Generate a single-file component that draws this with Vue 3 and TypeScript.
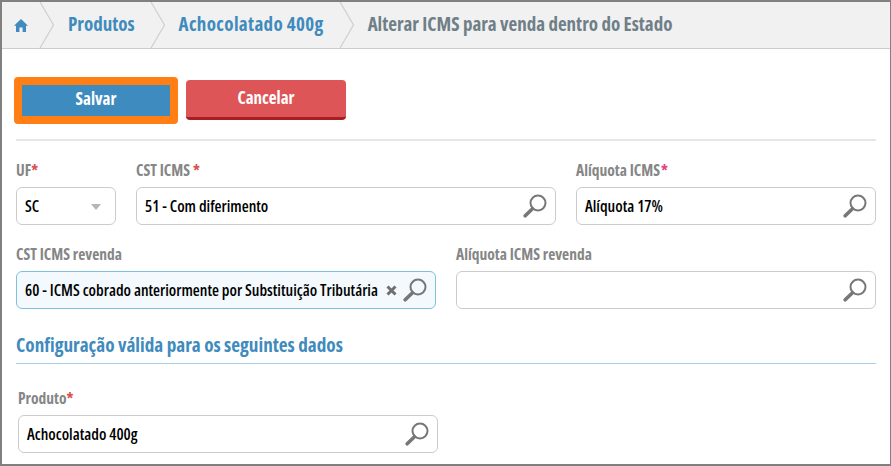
<script setup lang="ts">
const crumbs: string[] = ['Produtos', 'Achocolatado 400g']
</script>

<template>
  <div class="frame">
    <nav class="crumbs">
      <a class="crumb home">
        <svg width="14" height="13" viewBox="0 0 14 13"><path d="M7 0 L14 6.8 L12 6.8 L12 13 L8.6 13 L8.6 8.6 L5.4 8.6 L5.4 13 L2 13 L2 6.8 L0 6.8 Z" fill="#3f8bbd"/></svg>
        <svg class="chev" width="16" height="46" viewBox="0 0 16 46"><path d="M1 0 L14.5 23 L1 46" fill="none" stroke="#cfcfcf" stroke-width="1.2"/></svg>
      </a>
      <a v-for="c in crumbs" :key="c" class="crumb link">
        <span>{{ c }}</span>
        <svg class="chev" width="16" height="46" viewBox="0 0 16 46"><path d="M1 0 L14.5 23 L1 46" fill="none" stroke="#cfcfcf" stroke-width="1.2"/></svg>
      </a>
      <span class="current">Alterar ICMS para venda dentro do Estado</span>
    </nav>

    <main class="body">
      <div class="actions">
        <button class="btn save">Salvar</button>
        <button class="btn cancel">Cancelar</button>
      </div>
      <hr class="rule" />

      <div class="row row-a">
        <div class="field">
          <label>UF<i>*</i></label>
          <div class="box"><b>SC</b><span class="caret"></span></div>
        </div>
        <div class="field">
          <label>CST ICMS<i class="sp">*</i></label>
          <div class="box"><b>51 - Com diferimento</b><svg class="lens" width="24" height="24" viewBox="0 0 24 24"><circle cx="15" cy="9" r="7.5" fill="none" stroke="#777" stroke-width="2"/><path d="M9.5 14.8 L2.2 21.8" stroke="#777" stroke-width="3.6" stroke-linecap="round"/></svg></div>
        </div>
        <div class="field">
          <label>Alíquota ICMS<i class="pink">*</i></label>
          <div class="box"><b>Alíquota 17%</b><svg class="lens" width="24" height="24" viewBox="0 0 24 24"><circle cx="15" cy="9" r="7.5" fill="none" stroke="#777" stroke-width="2"/><path d="M9.5 14.8 L2.2 21.8" stroke="#777" stroke-width="3.6" stroke-linecap="round"/></svg></div>
        </div>
      </div>

      <div class="row row-b">
        <div class="field">
          <label>CST ICMS revenda</label>
          <div class="box filled"><b>60 - ICMS cobrado anteriormente por Substituição Tributária</b>
            <svg class="clear" width="11" height="11" viewBox="0 0 11 11"><path d="M1.5 1.5 L9.5 9.5 M9.5 1.5 L1.5 9.5" stroke="#6f6f6f" stroke-width="3"/></svg>
            <svg class="lens near" width="24" height="24" viewBox="0 0 24 24"><circle cx="15" cy="9" r="7.5" fill="none" stroke="#777" stroke-width="2"/><path d="M9.5 14.8 L2.2 21.8" stroke="#777" stroke-width="3.6" stroke-linecap="round"/></svg></div>
        </div>
        <div class="field">
          <label>Alíquota ICMS revenda</label>
          <div class="box"><svg class="lens" width="24" height="24" viewBox="0 0 24 24"><circle cx="15" cy="9" r="7.5" fill="none" stroke="#777" stroke-width="2"/><path d="M9.5 14.8 L2.2 21.8" stroke="#777" stroke-width="3.6" stroke-linecap="round"/></svg></div>
        </div>
      </div>

      <h2 class="section">Configuração válida para os seguintes dados</h2>

      <div class="field product">
        <label>Produto<i>*</i></label>
        <div class="box"><b>Achocolatado 400g</b><svg class="lens" width="24" height="24" viewBox="0 0 24 24"><circle cx="15" cy="9" r="7.5" fill="none" stroke="#777" stroke-width="2"/><path d="M9.5 14.8 L2.2 21.8" stroke="#777" stroke-width="3.6" stroke-linecap="round"/></svg></div>
      </div>
    </main>
  </div>
</template>

<style>
html, body { margin: 0; background: #fff; }
</style>

<style scoped>
.frame {
  width: 891px;
  height: 466px;
  box-sizing: border-box;
  border: 2px solid #808080;
  border-right-width: 1px;
  background: #fff;
  overflow: hidden;
  font-family: "Open Sans", "Roboto", sans-serif;
  font-stretch: 75%;
  font-weight: 700;
}
.crumbs {
  display: flex;
  align-items: center;
  height: 46px;
  background: #f1f1f1;
  border-bottom: 1px solid #cccccc;
  font-size: 19px;
}
.crumb { display: flex; align-items: center; height: 46px; }
.home { width: 53px; padding-left: 12px; box-sizing: border-box; }
.home .chev { margin-left: auto; }
.link { color: #3f8bbd; padding-left: 13px; gap: 15px; }
.link span { padding-bottom: 3px; }
.link:nth-of-type(3) span { letter-spacing: 0.35px; }
.chev { flex: none; }
.current { color: #6f7f88; padding-left: 13px; padding-bottom: 3px; }
.body { padding: 0 14px; }
.actions { display: flex; align-items: flex-start; padding-top: 28px; gap: 8px; margin-left: -2px; }
.btn {
  color: #fff;
  font: inherit;
  font-size: 17px;
  box-sizing: border-box;
}
.save {
  width: 164px;
  height: 47px;
  padding: 0 0 5px;
  background: #3e8bbf;
  border: 8px solid #ff7f14;
  border-radius: 4px;
}
.cancel {
  width: 160px;
  height: 40px;
  margin-top: 3px;
  padding: 0 0 2px;
  background: #de5558;
  border: 0;
  border-radius: 4px;
  border-bottom: 3px solid #a91e23;
}
.rule { border: 0; height: 2px; background: #e6e6e6; margin: 15px 0 21px; }
.row { display: grid; gap: 20px; }
.row-a { grid-template-columns: 100px 420px 300px; }
.row-b { grid-template-columns: 420px 420px; margin-top: 21px; }
.field label {
  display: block;
  height: 16px;
  line-height: 16px;
  font-size: 15.5px;
  color: #868686;
  margin-bottom: 9px;
}
.field i { font-style: normal; color: #d9534f; }
.field i.sp { margin-left: 3px; }
.field i.pink { color: #e0457f; margin-left: 1px; }
.box {
  height: 38px;
  box-sizing: border-box;
  border: 1px solid #cccccc;
  border-radius: 6px;
  display: flex;
  align-items: center;
  padding: 0 8px;
  background: #fff;
}
.box b { font-size: 16px; font-weight: 600; color: #000; white-space: nowrap; }
.filled { background: #f3f9fc; border-color: #7fc1dc; }
.lens { margin-left: auto; flex: none; }
.near { margin-left: 6px; }
.clear { margin-left: auto; flex: none; }
.caret {
  margin-left: auto;
  margin-right: 6px;
  margin-top: 2px;
  border-left: 5px solid transparent;
  border-right: 5px solid transparent;
  border-top: 6px solid #b5b5b5;
}
.section {
  margin: 27px 0 0;
  height: 27px;
  line-height: 18px;
  font-size: 19.2px;
  color: #3f8bbd;
  font-weight: 700;
  border-bottom: 1px solid #a6cfe8;
}
.product { width: 420px; margin: 26px 0 0 2px; }
</style>
